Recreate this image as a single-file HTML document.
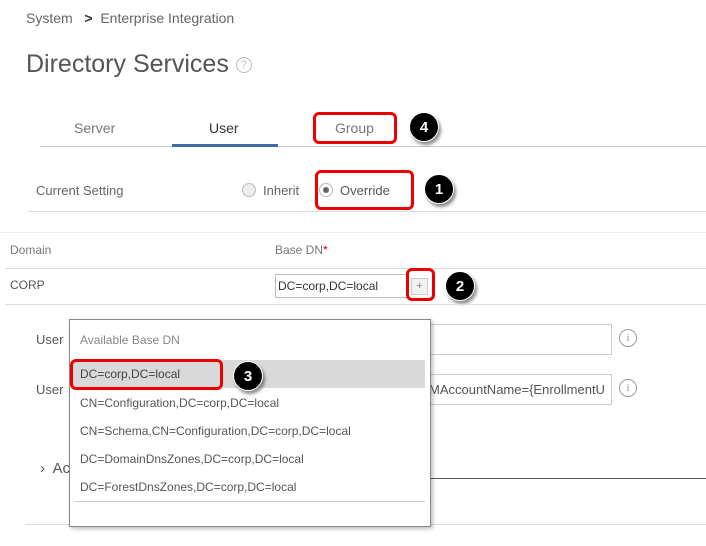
<!DOCTYPE html>
<html><head><style>
*{margin:0;padding:0;box-sizing:border-box}
body{width:706px;height:546px;background:#fff;position:relative;overflow:hidden;font-family:"Liberation Sans",sans-serif;color:#555}
.a{position:absolute;white-space:nowrap}
.t{font-size:13px}
.hl{position:absolute;height:1px;background:#ddd}
.red{position:absolute;border:3px solid #e00;border-radius:6px}
.num{position:absolute;width:30px;height:30px;border-radius:50%;background:#000;color:#fff;font-weight:bold;font-size:15px;text-align:center;line-height:30px;box-shadow:2px 3px 3px rgba(0,0,0,.45);border:1px solid #fff}
.info{position:absolute;width:18px;height:18px;border:1px solid #999;border-radius:50%;font-size:11px;color:#999;text-align:center;line-height:16px;font-family:"Liberation Serif",serif}
.radio{position:absolute;width:14px;height:14px;border-radius:50%;border:1px solid #bbb;background:#eee}
</style></head><body>
<div class="a" style="left:26px;top:10px;font-size:14px;color:#666">System&nbsp;&nbsp; <b style="color:#333">&gt;</b> &nbsp;Enterprise Integration</div>
<div class="a" style="left:26px;top:50px;font-size:25px;color:#555">Directory Services <span style="display:inline-block;width:16px;height:16px;border:1px solid #bbb;border-radius:50%;font-size:11px;color:#bbb;text-align:center;line-height:14px;vertical-align:middle">?</span></div>
<div class="a t" style="left:74px;top:120px;color:#777;font-size:14px">Server</div>
<div class="a t" style="left:209px;top:120px;color:#333;font-size:14px">User</div>
<div class="a t" style="left:335px;top:120px;color:#777;font-size:14px">Group</div>
<div class="hl" style="left:40px;top:146px;width:666px;background:#ccc"></div>
<div class="a" style="left:172px;top:144px;width:106px;height:3px;background:#3a6ea5"></div>
<div class="red" style="left:313px;top:112px;width:84px;height:32px"></div>
<div class="num" style="left:409px;top:112px">4</div>
<div class="a t" style="left:36px;top:183px;color:#666">Current Setting</div>
<div class="radio" style="left:242px;top:183px"></div>
<div class="a t" style="left:263px;top:183px;color:#666">Inherit</div>
<div class="radio" style="left:319px;top:183px;background:#fff"><div style="position:absolute;left:3px;top:3px;width:6px;height:6px;border-radius:50%;background:#666"></div></div>
<div class="a t" style="left:340px;top:183px;color:#555">Override</div>
<div class="red" style="left:315px;top:170px;width:99px;height:40px"></div>
<div class="num" style="left:424px;top:174px">1</div>
<div class="hl" style="left:28px;top:211px;width:678px"></div>
<div class="hl" style="left:0;top:232px;width:706px;background:#eee"></div>
<div class="a" style="left:10px;top:243px;font-size:12px;color:#777">Domain</div>
<div class="a" style="left:275px;top:243px;font-size:12px;color:#777">Base DN<span style="color:#c00">*</span></div>
<div class="hl" style="left:5px;top:268px;width:701px"></div>
<div class="a" style="left:10px;top:278px;font-size:12px;color:#555">CORP</div>
<div class="a" style="left:275px;top:274px;width:133px;height:24px;border:1px solid #bbb;font-size:12px;padding:4px 2px;color:#333">DC=corp,DC=local</div>
<div class="a" style="left:411px;top:278px;width:17px;height:17px;border:1px solid #ccc;background:#f2f2f2;font-size:11px;text-align:center;line-height:15px;color:#888">+</div>
<div class="red" style="left:406px;top:268px;width:29px;height:33px"></div>
<div class="num" style="left:445px;top:271px">2</div>
<div class="hl" style="left:5px;top:304px;width:701px"></div>
<div class="a t" style="left:36px;top:332px">User</div>
<div class="a t" style="left:36px;top:382px">User</div>
<div class="a" style="left:420px;top:324px;width:192px;height:31px;border:1px solid #ccc"></div>
<div class="a" style="left:420px;top:374px;width:192px;height:31px;border:1px solid #ccc;font-size:13px;padding:7px 0 0 8px;overflow:hidden;color:#555">MAccountName={EnrollmentU</div>
<div class="info" style="left:619px;top:329px">i</div>
<div class="info" style="left:619px;top:379px">i</div>
<div class="a" style="left:40px;top:460px;font-size:15px;color:#555">›&nbsp; Ac</div>
<div class="a" style="left:430px;top:478px;width:276px;height:1px;background:#555"></div>
<div class="hl" style="left:25px;top:524px;width:681px"></div>
<div class="a" style="left:69px;top:319px;width:362px;height:208px;border:1px solid #888;background:#fff;box-shadow:2px 2px 4px rgba(0,0,0,.25)">
 <div class="a" style="left:10px;top:13px;font-size:12px;color:#888">Available Base DN</div>
 <div class="a" style="left:3px;top:40px;width:352px;height:28px;background:#d9d9d9"></div>
 <div class="a" style="left:10px;top:47px;font-size:12px;color:#444">DC=corp,DC=local</div>
 <div class="a" style="left:10px;top:76px;font-size:12px;color:#555">CN=Configuration,DC=corp,DC=local</div>
 <div class="a" style="left:10px;top:104px;font-size:12px;color:#555">CN=Schema,CN=Configuration,DC=corp,DC=local</div>
 <div class="a" style="left:10px;top:132px;font-size:12px;color:#555">DC=DomainDnsZones,DC=corp,DC=local</div>
 <div class="a" style="left:10px;top:160px;font-size:12px;color:#555">DC=ForestDnsZones,DC=corp,DC=local</div>
 <div class="a" style="left:5px;top:181px;width:350px;height:1px;background:#ccc"></div>
</div>
<div class="red" style="left:70px;top:359px;width:153px;height:31px"></div>
<div class="num" style="left:233px;top:361px">3</div>
</body></html>
